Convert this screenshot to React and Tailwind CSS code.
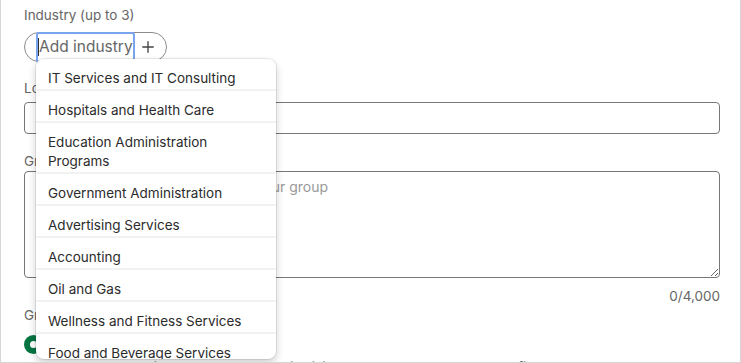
import React from 'react';
import { Plus } from 'lucide-react';

const INDUSTRIES = [
  'IT Services and IT Consulting',
  'Hospitals and Health Care',
  'Education Administration Programs',
  'Government Administration',
  'Advertising Services',
  'Accounting',
  'Oil and Gas',
  'Wellness and Fitness Services',
  'Food and Beverage Services',
  'Technology, Information and Internet',
];

const IndustryMenu = () => (
  <ul className="absolute left-[12px] top-[27px] z-10 h-[300px] w-[240px] overflow-hidden rounded-lg bg-white shadow-[0_0_0_1px_rgba(0,0,0,0.08),0_4px_8px_rgba(0,0,0,0.2)]">
    {INDUSTRIES.map((name) => (
      <li key={name} className="border-b-2 border-[#f2f2f2] px-3 pt-[10px] pb-[1px] text-[13.5px] leading-[19px] text-[#2b2b2b]">
        {name}
      </li>
    ))}
  </ul>
);

export default function App() {
  return (
    <div className="h-[363px] w-[741px] overflow-hidden border-x border-b border-[#d6d6d6] bg-white font-['Inter',sans-serif]">
      <div className="pl-[23px] pr-[20px] pt-[5px]">
        <p className="text-[13.5px] leading-[20px] text-[#666]">Industry (up to 3)</p>

        <div className="relative mt-[7px] h-[30px] w-fit">
          <div className="flex h-[30px] items-center rounded-full border border-[#8c8c8c] pl-[11px] pr-[9px]">
            <span className="flex h-[31px] items-center rounded-[3px] border-2 border-[#7ba4ee] text-[15.5px] text-[#666]">
              <span className="h-[18px] w-px bg-[#333]" />
              Add industry
            </span>
            <Plus className="ml-[4px] h-[18px] w-[18px] text-[#444]" strokeWidth={1.8} />
          </div>
          <IndustryMenu />
        </div>

        <p className="mt-[16px] text-[13.5px] leading-[20px] text-[#666]">Location</p>
        <div className="mt-[4px] flex h-[32px] items-center rounded-[4px] border border-[#777] px-3 text-[13.5px] text-[#999]">
          Add location
        </div>

        <p className="mt-[17px] text-[13.5px] leading-[20px] text-[#666]">Group rules</p>
        <textarea
          readOnly
          placeholder="Set the tone and expectations of your group"
          className="mt-0 block h-[107px] w-full resize-y rounded-[4px] border border-[#777] px-3 py-[5px] text-[14px] leading-[20px] text-[#333] placeholder:text-[#999] focus:outline-none"
        />
        <p className="mt-[8px] text-right text-[13.5px] leading-[20px] text-[#666]">0/4,000</p>

        <p className="text-[13.5px] leading-[18px] text-[#666]">Group discoverability</p>
        <div className="mt-[11px] flex items-start gap-3">
          <span className="h-[19px] w-[19px] shrink-0 rounded-full border-[6px] border-[#057642] bg-white" />
          <div className="text-[13.5px] text-[#333]">
            <p className="font-semibold leading-[22px]">Listed</p>
            <p className="leading-[20px] text-[#666]">Group appears in search results and is visible to others on members' profiles.</p>
          </div>
        </div>
      </div>
    </div>
  );
}
